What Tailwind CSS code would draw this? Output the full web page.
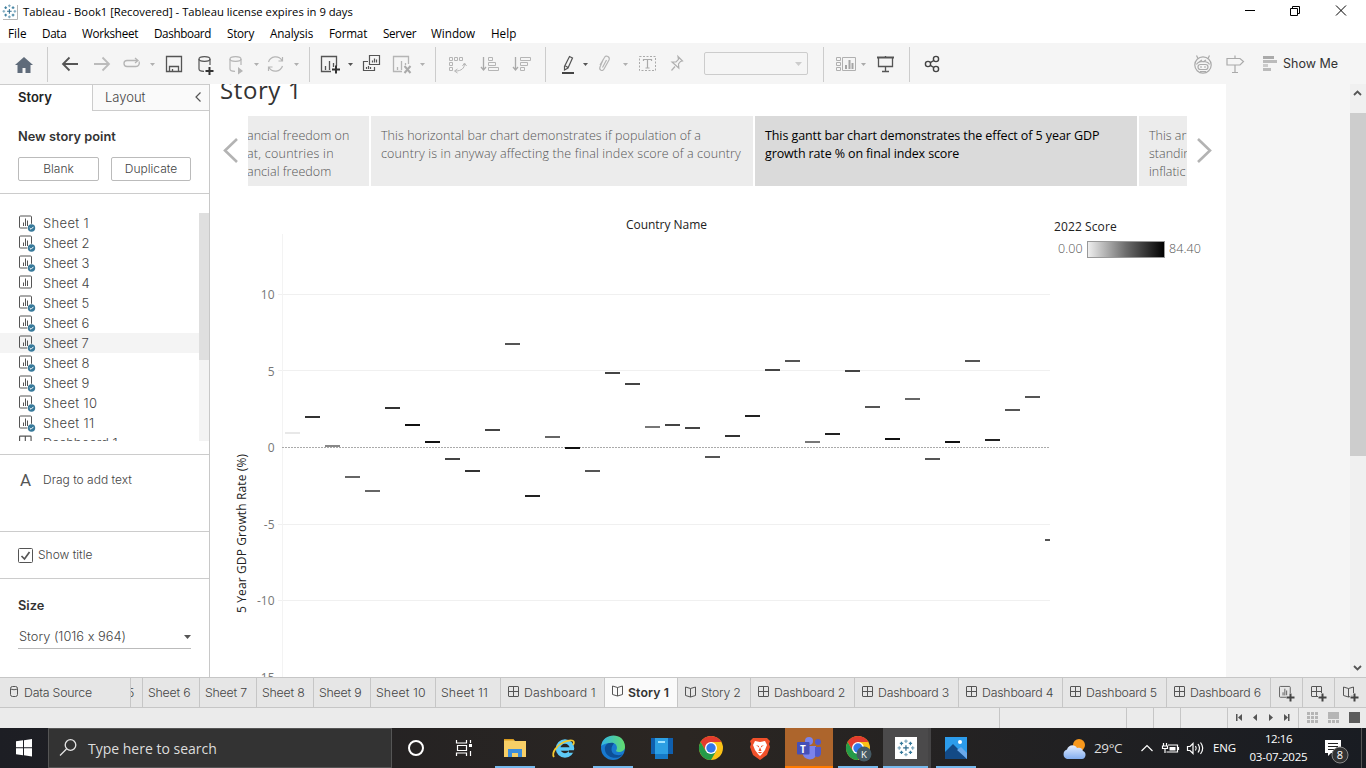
<!DOCTYPE html>
<html lang="en">
<head>
<meta charset="utf-8">
<title>Tableau - Book1</title>
<script src="https://cdn.jsdelivr.net/npm/@tailwindcss/browser@4"></script>
</head>
<body class="w-[1366px] h-[768px] overflow-hidden bg-white flex flex-col font-['Open_Sans',sans-serif] whitespace-nowrap">
<svg class="absolute w-0 h-0">
  <defs>
    <g id="logo" fill="none" stroke-width="1.1"><path stroke="#2c6a8c" d="M8 5.500v5M5.500 8h5"/><path stroke="#7ba7bd" d="M8 .5v3M6.500 2h3M8 12.500v3M6.500 14h3M.5 8h3M2 6.500v3M12.500 8h3M14 6.500v3"/><path stroke="#35799b" d="M4 2.500v3M2.500 4h3M12 2.500v3M10.500 4h3M4 10.500v3M2.500 12h3M12 10.500v3M10.500 12h3"/></g>
    <g id="sheet" fill="none" stroke="#555"><rect x=".5" y=".5" width="12" height="12" rx="1"/><path d="M4.500 7v3.500M6.500 3v7.500M8.500 5v5.500"/></g>
    <g id="ok"><circle cx="4" cy="4" r="4.300" fill="#fff"/><circle cx="4" cy="4" r="3.700" fill="#37799a"/><path d="M2.200 4l1.300 1.300L6 2.800" stroke="#fff" fill="none"/></g>
    <g id="dash" fill="none" stroke="#555"><rect x=".5" y=".5" width="10" height="10" rx=".5"/><path d="M5.500 .5v10M.5 5.500h10"/></g>
    <g id="book" fill="none" stroke="#555"><path d="M.5 1L5.500 2.500l5-1.500v8.500l-5 1.500-5-1.500zM5.500 2.500v8.500"/></g>
    <linearGradient id="ramp"><stop offset="0" stop-color="#f0f0f0"/><stop offset=".5" stop-color="#6c6c6c"/><stop offset="1" stop-color="#000"/></linearGradient>
    <linearGradient id="edge" x1="0" y1="0" x2="1" y2="0"><stop offset="0" stop-color="#32b5e6"/><stop offset="1" stop-color="#62dc6c"/></linearGradient>
    <linearGradient id="cloud" x1="0" y1="0" x2="0" y2="1"><stop offset="0" stop-color="#e6efff"/><stop offset="1" stop-color="#83aef0"/></linearGradient>
    <g id="chrome"><circle r="12" fill="#fbc116"/><path d="M-10.400-6A12 12 0 0 1 10.400-6H0L-5.200 3z" fill="#e33b2e"/><path d="M-10.400-6A12 12 0 0 0 0 12L5.200 3H-5.200z" fill="#259b48"/><circle r="6" fill="#fff"/><circle r="4.700" fill="#3477ea"/></g>
  </defs>
</svg>

<!-- title bar -->
<header class="h-6 flex items-center text-[11.250px] text-black">
  <svg class="ml-[2px] mt-[-1px]" width="16" height="16"><path d="M15.500 1v14.500H1" fill="none" stroke="#b5b5b5"/><use href="#logo" transform="scale(.92)"/></svg>
  <span class="ml-[5px]">Tableau - Book1 [Recovered] - Tableau license expires in 9 days</span>
  <svg class="ml-auto" width="126" height="24" viewBox="1240 0 126 24" fill="none" stroke="#000"><path d="M1245 10.500h10M1290.500 8.500h7v7h-7zM1292.500 8.500v-2h7v7h-2M1336 5.500l10 10M1346 5.500l-10 10"/></svg>
</header>
<nav class="h-[19px] flex items-center text-[11.700px] text-black pl-2">
  <div class="w-[34px]">File</div><div class="w-[40px] tracking-[-.3px]">Data</div><div class="w-[72px] tracking-[-.3px]">Worksheet</div><div class="w-[73px] tracking-[-.36px]">Dashboard</div><div class="w-[43px] tracking-[-.25px]">Story</div><div class="w-[59px] tracking-[-.1px]">Analysis</div><div class="w-[54px] tracking-[-.2px]">Format</div><div class="w-[48px] tracking-[-.3px]">Server</div><div class="w-[60px]">Window</div><div>Help</div>
</nav>

<!-- toolbar -->
<div class="h-[41px] bg-[#f5f5f5] flex">
  <svg width="48" height="41" viewBox="0 43 48 41"><path d="M15 65l9-8 9 8h-2.500v8h-5v-5h-3v5h-5v-8z" fill="#5f6b7a"/><path d="M47.500 47v35" stroke="#ccc"/></svg>
  <svg width="262" height="41" viewBox="48 43 262 41" fill="none">
    <g stroke-width="1.800"><path d="M78 64H63M69.500 57.500L63 64l6.500 6.500" stroke="#555"/><path d="M94 64h15M102.500 57.500L109 64l-6.500 6.500" stroke="#bbb"/></g>
    <path d="M133 60.500h-6a3 3 0 0 0 0 6h9a3.500 3.500 0 0 0 3-5M130 60.500h7M135 58l3 2.500-3 2.500" stroke="#b5b5b5" stroke-width="1.300"/>
    <path d="M150 63h5l-2.500 3zM254 63h5l-2.500 3zM294 63h5l-2.500 3z" fill="#b0b0b0"/>
    <path d="M166.500 56.500h15v15h-15zM169.500 71.500v-5h9v5M172.500 71v-2" stroke="#555" stroke-width="1.300"/>
    <g stroke="#555" stroke-width="1.200"><ellipse cx="204.500" cy="59" rx="5.500" ry="2.300"/><path d="M199 59v10c0 1.500 2 2.300 5 2.300M210 59v6"/></g><path d="M209.500 67v8M205.500 71h8" stroke="#333" stroke-width="2"/>
    <g stroke="#b5b5b5" stroke-width="1.200"><ellipse cx="235.500" cy="59" rx="5.500" ry="2.300"/><path d="M230 59v10c0 1.500 2 2.300 5 2.300M241 59v6"/></g><path d="M238 67l5 4-5 3.500z" fill="#b5b5b5"/>
    <path d="M268.500 62a7.500 7.500 0 0 1 13.500-1.500M282.500 66a7.500 7.500 0 0 1-13.500 1.500M282.500 57v4h-4M268.500 71v-4h4" stroke="#b5b5b5" stroke-width="1.200"/>
    <path d="M309.500 47v35" stroke="#ccc"/></svg>
  <svg width="236" height="41" viewBox="310 43 236 41" fill="none">
    <path d="M331 71.500h-9.500v-15h15V66M325.500 70v-4M329.500 70v-9M333.500 67v-4" stroke="#555" stroke-width="1.300"/><path d="M336 65.500v8M332 69.500h8" stroke="#333" stroke-width="2"/><path d="M348 63h5l-2.500 3z" fill="#555"/>
    <path d="M368 61.500h-4.500v9h11v-3.500M369.500 55.500h10v9h-10zM372.500 62.500v-2M374.500 62.500v-4M376.500 62.500v-3M366.500 69v-2M368.500 69v-3M370.500 69v-2" stroke="#555" stroke-width="1.200"/>
    <path d="M402 71.500h-8.500v-15h15V64M397.500 70v-3M401.500 70v-9M405.500 65v-2" stroke="#b5b5b5" stroke-width="1.300"/><path d="M404.500 66l6 7M410.500 66l-6 7" stroke="#aaa" stroke-width="2"/><path d="M420 63h5l-2.500 3z" fill="#b0b0b0"/>
    <path d="M435.500 47v35M545.500 47v35" stroke="#ccc"/>
    <path d="M449.500 57.500h3v3h-3zM454.500 57.500h3v3h-3zM459.500 57.500h3v3h-3zM449.500 62.500h3v3h-3zM449.500 67.500h3v3h-3zM464.500 64c0 4-3 7-9 7M462.500 66l2-3 2 3M457.500 69l-3 2 3 2" stroke="#b5b5b5"/>
    <path d="M483.500 57v13M481 67l2.500 3 2.500-3M515.500 57v13M513 67l2.500 3 2.500-3" stroke="#aaa" stroke-width="1.300"/>
    <path d="M488.500 57.500h4v3h-4zM488.500 62.500h7v3h-7zM488.500 67.500h10v3h-10zM520.500 57.500h10v3h-10zM520.500 62.500h7v3h-7zM520.500 67.500h4v3h-4z" stroke="#b5b5b5"/></svg>
  <svg width="289" height="41" viewBox="546 43 289 41" fill="none">
    <path d="M569.500 56.500l3 1.500-4.500 10-3.500 2v-3.500zM565.500 66l2.500 1.500" stroke="#555" stroke-width="1.200"/><path d="M562 73h12" stroke="#444" stroke-width="2"/><path d="M583 63h5l-2.500 3z" fill="#555"/>
    <path d="M603 60l-3 7c-1.200 3 2.500 5 4 2l5-9c1.300-3-2.800-5.500-4.500-2.500L600 65M606.500 60l-4 7.500" stroke="#b5b5b5" stroke-width="1.200"/><path d="M623 63h5l-2.500 3z" fill="#b0b0b0"/>
    <rect x="639.500" y="56.500" width="16" height="14" stroke="#aaa" stroke-dasharray="2 1.500"/><path d="M643.500 61v-1.500h8V61M647.500 59.500V68M645.500 68h4" stroke="#aaa" stroke-width="1.200"/>
    <path d="M678 56.500l4.500 4.500-2 .5-2 2.500.3 4-6.800-6 4-.2 2.500-2.500zM675 66.500l-3.500 4" stroke="#b0b0b0" stroke-width="1.200"/>
    <rect x="704.500" y="52.500" width="103" height="22" rx="1.500" stroke="#ccc"/><path d="M795 62h7l-3.500 4z" fill="#ccc"/>
    <path d="M823.500 47v35" stroke="#ccc"/></svg>
  <svg width="120" height="41" viewBox="835 43 120 41" fill="none">
    <path d="M836.500 57.500h4v3h-4zM836.500 62.500h4v3h-4zM836.500 67.500h4v3h-4zM842.500 57.500h13v13h-13z" stroke="#b0b0b0"/><path d="M846 69v-4M849.500 69v-9M852.500 69v-6" stroke="#a5a5a5" stroke-width="2"/><path d="M861 63h5l-2.500 3z" fill="#aaa"/>
    <path d="M877 57.500h17" stroke="#555" stroke-width="2"/><path d="M878.500 58v8.500h14V58M885.500 56v1M885.500 67v4M882 71.500h7" stroke="#555" stroke-width="1.300"/>
    <path d="M909.500 47v35" stroke="#ccc"/><g stroke="#444" stroke-width="1.400"><circle cx="928" cy="64" r="2.600"/><circle cx="936" cy="59" r="2.600"/><circle cx="936" cy="69" r="2.600"/><path d="M930.300 62.700l3.500-2.200M930.300 65.300l3.500 2.200"/></g></svg>
  <svg class="ml-auto" width="88" height="41" viewBox="1192 43 88 41" fill="none">
    <g stroke="#aaa" stroke-width="1.200"><circle cx="1203" cy="65" r="8.200"/><path d="M1198 58.500l-1.500-3M1208 58.500l1.500-3M1196.500 64.500c2-4 11-4 13 0M1199 62l3-2M1203 62l3-2"/><rect x="1198" y="64.500" width="10" height="5" rx="2.500"/><path d="M1200 67h2M1204 67h2M1200 71.500h6"/>
    <path d="M1227 58.500h13l3.500 3-3.500 3.500h-13zM1235 55.500v3M1235 65.500v6.500M1232 72.500h6"/></g>
    <path d="M1263 56h11v3h-11z" fill="#aaa"/><path d="M1263 60h14v3h-14zM1263 68h8v3h-8z" fill="#bbb"/><path d="M1263 64h5v3h-5z" fill="#ccc"/></svg>
  <span class="w-[86px] pl-[3px] font-['Inter'] text-[12.500px] text-[#333] leading-[41px]">Show Me</span>
</div>

<main class="h-[593px] flex">
  <!-- story pane -->
  <aside class="w-[210px] flex flex-col border-r border-[#c8c8c8] font-['Inter',sans-serif] text-[12px] text-[#444] font-light [font-variant-ligatures:no-contextual]">
    <div class="h-[27px] flex shrink-0 leading-[24px] text-[13px]">
      <div class="w-[92px] border-t border-[#ccc] pl-[18px] font-semibold text-[#222]">Story</div>
      <div class="flex-1 flex border-t border-l border-b border-[#ccc] bg-[#fafafa] pl-[12px]">Layout
        <svg class="ml-auto mr-[7px] mt-[7px]" width="7" height="10" fill="none" stroke="#555" stroke-width="1.200"><path d="M5.500 .5L1 5l4.500 4.500"/></svg></div>
    </div>
    <div class="h-[83px] border-b border-[#ccc] pl-[18px] pt-[16px]">
      <div class="font-semibold text-[#333] leading-5 text-[12.800px]">New story point</div>
      <div class="flex gap-3 mt-[10px] leading-[21px] text-center">
        <div class="w-[81px] h-6 border border-[#bbb] rounded-[2px]">Blank</div>
        <div class="w-[80px] h-6 border border-[#bbb] rounded-[2px]">Duplicate</div>
      </div>
    </div>
    <div class="h-[261px] border-b border-[#ccc] pt-[19px] flex">
      <div id="sheets" class="w-[199px] h-[228px] overflow-hidden leading-5 text-[13px]"></div>
      <div class="w-[10px] h-[228px] bg-[#f3f3f3]"><div class="h-[147px] bg-[#dfdfdf]"></div></div>
    </div>
    <div class="h-[77px] border-b border-[#ccc] flex pl-[20px] pt-[15px] leading-5">
      <span class="w-[23px] text-[17px] font-normal text-[#555] font-['Roboto']">A</span>Drag to add text
    </div>
    <div class="h-[47px] border-b border-[#ccc] flex items-center pl-[18px]">
      <svg width="15" height="15" fill="none" stroke="#555"><rect x=".5" y=".5" width="14" height="14" rx="1"/><path d="M3.500 8l3 3 5-7" stroke-width="1.700"/></svg>
      <span class="ml-[5px]">Show title</span>
    </div>
    <div class="pl-[18px] pt-[17px] leading-5">
      <div class="font-semibold text-[#333] text-[12.800px]">Size</div>
      <div class="mt-[11px] w-[173px] h-[22px] border-b border-[#bbb] flex pl-px text-[12.800px]">Story (1016 x 964)<svg class="ml-auto mt-[8px]" width="7" height="4"><path d="M0 0h7L3.500 4z" fill="#555"/></svg></div>
    </div>
  </aside>

  <!-- story canvas -->
  <section class="w-[1016px] h-[593px] overflow-hidden flex flex-col font-['Open_Sans',sans-serif] text-[12.500px]">
    <h1 class="h-[32px] pl-[10px] text-[24px] tracking-[.6px] leading-[31px] mt-[-10px] text-[#333] font-normal">Story 1</h1>
    <div class="mt-[10px] h-[70px] flex text-[#555] font-light leading-[18px]">
      <svg width="38" height="70" fill="none" stroke="#b3b3b3" stroke-width="2.600"><path d="M27 23L15 34.500 27 46"/></svg>
      <div class="w-[939px] h-[70px] overflow-hidden flex gap-[2px]">
        <div class="w-[121px] shrink-0 bg-[#ececec] pt-[11px]"><div class="ml-[-1px] tracking-[.05px]">ancial freedom on<br><span class="tracking-[.25px]">at, countries in</span><br>ancial freedom</div></div>
        <div class="w-[382px] shrink-0 bg-[#ececec] pt-[11px] pl-[10px]"><span class="tracking-[.06px]">This horizontal bar chart demonstrates if population of a</span><br><span class="tracking-[.15px]">country is in anyway affecting the final index score of a country</span></div>
        <div class="w-[382px] shrink-0 bg-[#dadada] pt-[11px] pl-[10px] text-black font-normal tracking-[-.09px]">This gantt bar chart demonstrates the effect of 5 year GDP<br><span class="tracking-[-.13px]">growth rate % on final index score</span></div>
        <div class="w-[48px] shrink-0 bg-[#ececec] pt-[11px] pl-[10px]">This ar<br>standin<br>inflatic</div>
      </div>
      <svg width="39" height="70" fill="none" stroke="#b3b3b3" stroke-width="2.600"><path d="M11 23l12 11.500L11 46"/></svg>
    </div>
    <div class="flex flex-1">
      <svg id="chart" width="840" height="491" viewBox="210 186 840 491" font-family="Open Sans, sans-serif" font-size="12"></svg>
      <div class="pt-[32px] pl-[4px]">
        <div class="text-[#222] font-medium leading-[18px] text-[12px] tracking-[.1px]">2022 Score</div>
        <div class="flex items-center mt-[4px] pl-[4px] text-[#555] font-light leading-[18px]"><div class="w-[29px] tracking-[.1px]">0.00</div><svg width="78" height="17"><rect x=".5" y=".5" width="77" height="16" fill="url(#ramp)" stroke="#999"/></svg><span class="ml-[4px] tracking-[.1px]">84.40</span></div>
      </div>
    </div>
  </section>
  <div class="w-[124px] bg-[#f5f5f5]"></div>
  <div class="w-4 bg-[#f0f0f0] flex flex-col items-center">
    <svg class="shrink-0" width="16" height="29" fill="none" stroke="#555" stroke-width="1.800"><path d="M4 11l3.500-3.500L11 11"/></svg>
    <div class="w-full h-[343px] shrink-0 bg-[#cdcdcd]"></div>
    <svg class="mt-auto shrink-0" width="16" height="17" fill="none" stroke="#555" stroke-width="1.800"><path d="M4 6l3.500 3.500L11 6"/></svg>
  </div>
</main>

<!-- sheet tabs -->
<div id="tabs" class="h-[31px] border-t border-b border-[#c6c6c6] bg-[#e6e6e6] flex shrink-0 font-['Inter',sans-serif] font-light text-[12.300px] text-[#444] leading-[29px]"></div>
<div class="h-5 shrink-0 bg-[#ebebeb] flex justify-end">
  <svg width="367" height="20" viewBox="999 708 367 20"><path d="M999.500 708v20M1126.500 708v20M1153.500 708v20M1180.500 708v20M1227.500 708v20M1298.500 708v20" stroke="#c6c6c6"/>
  <path d="M1236 714h1.500v7H1236zM1242 714v7l-4-3.500zM1257 714v7l-4-3.500zM1269 714v7l4-3.500zM1284 714v7l4-3.500zM1288 714h1.500v7H1288z" fill="#555"/>
  <path d="M1307 712h3v3h-3zM1311 712h3v3h-3zM1315 712h3v3h-3zM1307 716h3v3h-3zM1311 716h3v3h-3zM1315 716h3v3h-3zM1307 720h3v3h-3zM1311 720h3v3h-3zM1315 720h3v3h-3zM1328 712h11v7h-11zM1328 720h3v3h-3zM1332 720h3v3h-3zM1336 720h3v3h-3z" fill="#b5b5b5"/><path d="M1349 712h11v11h-11z" fill="#5c5c5c"/></svg>
</div>

<!-- taskbar -->
<footer class="h-10 shrink-0 bg-linear-to-r from-[#1d1e24] via-[#2b2622] to-[#191c22] flex text-white text-[12px]">
  <svg width="48" height="40"><path d="M16 13.300l7-1v7h-7zM24 12.200l8-1.200v8.300h-8zM16 20.300h7v7l-7-1zM24 20.300h8V28.500l-8-1.200z" fill="#fff"/></svg>
  <div class="w-[344px] bg-[#333] border border-[#555] flex items-center text-[14px] text-[#ddd]"><svg class="ml-[10px]" width="20" height="20" fill="none" stroke="#e5e5e5" stroke-width="1.300"><circle cx="11.500" cy="7" r="5.300"/><path d="M7.500 11L1 17.500"/></svg><span class="ml-[9px]">Type here to search</span></div>
  <svg width="393" height="40" viewBox="392 728 393 40">
    <circle cx="416" cy="748" r="7" fill="none" stroke="#fff" stroke-width="2"/>
    <path d="M456.500 740v3h10v-3M456.500 756v-3h10v3M457.500 745.500h9v5h-9zM470.500 740v3M470.500 751v5" fill="none" stroke="#fff" stroke-width="1.200"/><path d="M469 744h3v3h-3z" fill="#fff"/>
    <path d="M504 739h9l2 2h11v16h-22z" fill="#f7cf66"/><path d="M504 739h9l1.500 1.500H504z" fill="#d99a1c"/><path d="M508 757v-8h14v8h-4v-4h-6v4z" fill="#3d8edb"/>
    <path d="M495 766h40v2h-40zM593 766h40v2h-40z" fill="#76b9ed"/>
    <circle cx="565" cy="748.500" r="7" fill="none" stroke="#5ecbf7" stroke-width="4.500"/><path d="M560 749h13" stroke="#5ecbf7" stroke-width="3.500"/><path d="M569 751.500h6" stroke="#2a2726" stroke-width="2.500"/><path d="M554 757c-3-4 3-12 10-15s12-2 9 3" fill="none" stroke="#f3c72c" stroke-width="1.800"/>
    <circle cx="613" cy="748" r="12" fill="#1879cf"/><path d="M601.200 746C603 732 625 732 625 747c0 5-7 6-9 4 2-3 1-8-4-8-5-.5-9 1-10.800 3z" fill="url(#edge)"/><path d="M614 743.200c-6-1.500-10 2-9 7 1 6 8 9 14 7 2-.8 3-2 3.500-3-4 2-11 1-11-5 0-3 1.500-4.500 2.500-6z" fill="#0d4f96"/>
    <path d="M651 738h22v16h-22z" fill="#0f5fae"/><path d="M655 738h13v19h-13z" fill="#2c9fe3"/><path d="M658 741h7v2h-7z" fill="#a0e3ff"/><path d="M655 754h13v5h-13z" fill="#1679c6"/>
    <use href="#chrome" transform="translate(711 748)"/>
    <path d="M753 738h14l3 3-1 3 1 3-3 8-7 5-7-5-3-8 1-3-1-3z" fill="#f0502a"/><path d="M755 741l5 1 5-1 2 4-2 5-3 4-2 2-2-2-3-4-2-5z" fill="#fff"/><path d="M756 745l3 1v1.500zM764 745l-3 1v1.500zM760 747l1.500 4h-3zM757.500 752h5l-2.500 1.500z" fill="#f0502a"/></svg>
  <div class="w-[48px] bg-[#ad652c] border-b-2 border-[#ff7a00]"><svg width="48" height="38" viewBox="785 728 48 38"><circle cx="809" cy="741" r="4" fill="#7b83eb"/><circle cx="818" cy="742" r="3" fill="#5059c9"/><path d="M803 746h13v8c0 7-11 7-13 1z" fill="#7b83eb"/><path d="M815 747h6v6c0 4-4 5-6 3z" fill="#5059c9"/><rect x="797" y="742" width="12.500" height="12.500" rx="1" fill="#4650b8"/><text x="800" y="752.500" font-size="10" font-weight="700" fill="#fff">T</text></svg></div>
  <div class="w-[50px]"><svg width="50" height="40" viewBox="833 728 50 40"><use href="#chrome" transform="translate(858 748)"/><circle cx="864" cy="754" r="7.500" fill="#455a64"/><text x="861" y="757.500" font-size="9.500" fill="#fff">K</text><path d="M838 766h40v2h-40z" fill="#76b9ed"/></svg></div>
  <div class="w-[45px] bg-[#4b4a4b] border-b-2 border-[#76b9ed] pl-[12px] pt-[9px]"><svg width="22" height="22"><path d="M0 0h22v22H0z" fill="#fff"/><use href="#logo" transform="translate(2 2) scale(1.120)"/></svg></div>
  <svg width="60" height="40" viewBox="928 728 60 40"><path d="M928 728h3v40h-3z" fill="#454445"/><path d="M945 737h22v22h-22z" fill="#2c9ceb"/><path d="M945 752l8-8 10 10 4 5h-22z" fill="#134a86"/><path d="M957 750l4-3 6 6v6z" fill="#6aa9ea"/><circle cx="960" cy="742" r="2" fill="#fff"/><path d="M936 766h40v2h-40z" fill="#76b9ed"/></svg>
  <div class="ml-auto w-[304px] flex items-center">
    <svg width="28" height="40" viewBox="1062 728 28 40"><circle cx="1079" cy="745" r="6" fill="#f8981c"/><path d="M1067 759a5 5 0 0 1 0-9.500c1-5 8-6 10-1.500 3-1 5 0 6 3 4 1 3 8-1 8z" fill="url(#cloud)"/></svg>
    <div class="ml-[4px] w-[46px] text-[13.500px] tracking-[-.4px] text-[#ddd]">29°C</div>
    <svg width="75" height="40" viewBox="1140 728 75 40" fill="none" stroke="#fff" stroke-width="1.200"><path d="M1141.500 751l5.500-5.500 5.500 5.500M1168 745h9.500v7h-11M1178.500 747v3M1163.500 743v3M1166.500 743v3M1162.500 746h5v2.500h-5zM1165 748.500v4.500"/><path d="M1169.500 747h6v3.500h-6z" fill="#fff" stroke="none"/><path d="M1187.500 746.500h2.500l3-3v10l-3-3h-2.500zM1195.500 746q1.500 2.300 0 4.500M1198 744q3 4.300 0 8.500M1200.500 742.500q4.500 5.800 0 11.500"/></svg>
    <div class="ml-[-2px] w-[36px] text-[11.500px] tracking-[-.14px]">ENG</div>
    <div class="w-[59px] text-center leading-[18px] text-[11.500px] tracking-[-.2px]"><span class="tracking-[-.45px]">12:16</span><br>03-07-2025</div>
    <svg class="ml-auto" width="50" height="40" viewBox="1316 728 50 40"><path d="M1325 740h16v13h-10l-3 3v-3h-3z" fill="#fff"/><path d="M1328 743.500h10M1328 746.500h10M1328 749.500h7" stroke="#222"/><circle cx="1340" cy="755" r="8" fill="#333" stroke="#888"/><text x="1336.800" y="759" font-size="11" fill="#fff">8</text><path d="M1361.500 728v40" stroke="#555"/></svg>
  </div>
</footer>

<script>
const sheets = document.getElementById('sheets');
for (let i = 1; i <= 12; i++) {
  const label = i < 12 ? 'Sheet ' + i : 'Dashboard 1';
  const icon = i < 12 ? '<use href="#sheet"/>' : '<use href="#dash" transform="scale(1.150)"/>';
  const tick = (i < 12 && i !== 4) ? '<use href="#ok" x="8.500" y="8.500"/>' : '';
  const fit = i === 1 || i === 10 || i === 11 ? 'tracking-[.35px]' : '';
  sheets.insertAdjacentHTML('beforeend', `<div class="h-5 flex items-center pl-[19px] ${i === 7 ? 'bg-[#f4f4f4]' : ''}"><svg width="24" height="18" viewBox="0 -1.500 24 18" class="shrink-0">${icon}${tick}</svg><span class="${fit}">${label}</span></div>`);
}

const chart = document.getElementById('chart');
let c = '<g stroke="#f0f0f0">';
[294.5, 370.5, 524.5, 600.5].forEach(y => c += `<path d="M278 ${y}h772"/>`);
c += '<path d="M282.500 234v443" stroke="#f3f3f3"/></g><path d="M282 447.500h768" stroke="#aaa" stroke-dasharray="2 1"/>';
[[10, 299], [5, 375.5], [0, 452], [-5, 529], [-10, 605], [-15, 682]].forEach(([t, y]) => c += `<text x="274.500" y="${y}" text-anchor="end" fill="#777">${t}</text>`);
c += '<g font-weight="500" fill="#222"><text x="626" y="229" textLength="81">Country Name</text><text transform="translate(246 613) rotate(-90)" textLength="159">5 Year GDP Growth Rate (%)</text></g>';
const marks = [[433,'#e8e8e8'],[417,'#333'],[446,'#888'],[477,'#666'],[491,'#666'],[408,'#333'],[425,'#111'],[442,'#111'],[459,'#444'],[471,'#333'],[430,'#444'],[344,'#555'],[496,'#222'],[437,'#666'],[448,'#111'],[471,'#555'],[373,'#444'],[384,'#444'],[427,'#777'],[425,'#444'],[428,'#444'],[457,'#555'],[436,'#333'],[416,'#222'],[370,'#444'],[361,'#555'],[442,'#777'],[434,'#222'],[371,'#444'],[407,'#555'],[439,'#111'],[399,'#666'],[459,'#555'],[442,'#111'],[361,'#555'],[440,'#222'],[410,'#555'],[397,'#555'],[540,'#555']];
marks.forEach(([y, f], i) => c += `<rect x="${285 + i * 20}" y="${y - 1}" width="15" height="2" fill="${f}"/>`);
chart.innerHTML = c;

const tabs = [['Data Source',131,24,''],['5',12,-4,''],['Sheet 6',57,5,''],['Sheet 7',57,5,''],['Sheet 8',57,5,''],['Sheet 9',57,5,''],['Sheet 10',65,5,''],['Sheet 11',65,5,''],['Dashboard 1',104,7,'dash'],['Story 1',73,7,'book'],['Story 2',73,7,'book'],['Dashboard 2',104,7,'dash'],['Dashboard 3',104,7,'dash'],['Dashboard 4',104,7,'dash'],['Dashboard 5',104,7,'dash'],['Dashboard 6',104,7,'dash']];
let h = '';
tabs.forEach(([t, w, p, ic], i) => {
  const svg = ic ? `<svg class="mr-[5px] mt-[-2px] shrink-0" width="11" height="12"><use href="#${ic}"/></svg>` : i === 0 ? '<svg class="ml-[-14px] mr-[6px] mt-[-2px] shrink-0" width="8" height="11" fill="none" stroke="#555"><rect x=".5" y=".5" width="7" height="10" rx="2"/><path d="M.5 3q3.500 1.500 7 0"/></svg>' : '';
  const fit = / 1$|1[01]$|5$/.test(t) && t.length > 1 && !/5$/.test(t) ? 'tracking-[.1px]' : 'tracking-[-.2px]';
  h += `<div class="shrink-0 h-[29px] flex items-center overflow-hidden border-r border-[#c6c6c6] ${t === 'Story 1' ? 'bg-[#fafafa] font-semibold text-[#333] pb-px' : ''}" style="width:${w}px"><span class="flex items-center ${fit}" style="margin-left:${p}px">${svg}${t}</span></div>`;
});
['sheet', 'dash', 'book'].forEach(k => h += `<div class="w-8 shrink-0 h-[29px] border-r border-[#c6c6c6] flex items-center pl-[8px]"><svg class="shrink-0" width="18" height="18" viewBox="0 -2 18 18"><use href="#${k}" ${k === 'sheet' ? 'transform="scale(.9)"' : ''}/><path d="M11.500 7v9M7 11.500h9" stroke="#e6e6e6" stroke-width="4"/><path d="M11.500 7.500v8M7.500 11.500h8" stroke="#444" stroke-width="2"/></svg></div>`);
document.getElementById('tabs').innerHTML = h;
</script>
</body>
</html>
